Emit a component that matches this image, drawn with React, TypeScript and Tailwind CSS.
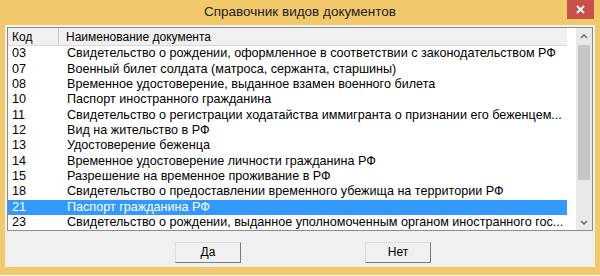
import React from 'react';

const rows = [
  { code: '03', name: 'Свидетельство о рождении, оформленное в соответствии с законодательством РФ' },
  { code: '07', name: 'Военный билет солдата (матроса, сержанта, старшины)' },
  { code: '08', name: 'Временное удостоверение, выданное взамен военного билета' },
  { code: '10', name: 'Паспорт иностранного гражданина' },
  { code: '11', name: 'Свидетельство о регистрации ходатайства иммигранта о признании его беженцем...' },
  { code: '12', name: 'Вид на жительство в РФ' },
  { code: '13', name: 'Удостоверение беженца' },
  { code: '14', name: 'Временное удостоверение личности гражданина РФ' },
  { code: '15', name: 'Разрешение на временное проживание в РФ' },
  { code: '18', name: 'Свидетельство о предоставлении временного убежища на территории РФ' },
  { code: '21', name: 'Паспорт гражданина РФ' },
  { code: '23', name: 'Свидетельство о рождении, выданное уполномоченным органом иностранного гос...' },
];

const selected = '21';

function Button({ label }: { label: string }) {
  return (
    <button className="h-[21px] w-[66px] border border-[#dcdcdc] border-r-[#7a7a7a] border-b-[#7a7a7a] bg-[#f0f0f0] text-[12px] text-black">
      {label}
    </button>
  );
}

export default function App() {
  return (
    <div className="flex h-[276px] w-[600px] flex-col bg-white font-['Liberation_Sans',Arial,sans-serif]">
      <div className="flex h-[275px] flex-col bg-[#f1c86a] px-[5px] pb-[8px]">
        {/* title bar */}
        <div className="relative flex h-[25px] items-center justify-center">
          <span className="text-[13.5px] text-[#222]">Справочник видов документов</span>
          <div className="absolute right-[1px] top-0 flex h-[19px] w-[27px] items-center justify-center bg-[#c9504b]">
            <svg width="9" height="9" viewBox="0 0 9 9">
              <path d="M1 1L8 8M8 1L1 8" stroke="#fff" strokeWidth="1.8" />
            </svg>
          </div>
        </div>

        {/* client */}
        <div className="flex flex-1 flex-col bg-[#f0f0f0] px-[2px] pt-[2px]">
          <div className="flex h-[204px] border border-[#8c8c8c] bg-white">
            <div className="flex w-[559px] flex-col overflow-hidden text-[12.6px] text-black">
              <div className="flex h-[18px] border-b border-[#d8d8d8] bg-[#f0f0f0] text-[12px]">
                <div className="flex w-[51px] items-center border-r border-[#c8c8c8] pl-[4px]">Код</div>
                <div className="flex items-center pl-[7px]">Наименование документа</div>
              </div>
              {rows.map((r) => (
                <div
                  key={r.code}
                  className={
                    r.code === selected
                      ? 'flex h-[15.36px] items-center bg-[#3399ff] text-white'
                      : 'flex h-[15.36px] items-center'
                  }
                >
                  <div className="w-[52px] shrink-0 pl-[4px]">{r.code}</div>
                  <div className="whitespace-nowrap pl-[7px]">{r.name}</div>
                </div>
              ))}
            </div>
            <div className="flex-1" />
            {/* scrollbar */}
            <div className="flex w-[16px] flex-col items-center bg-[#e9e9e9]">
              <div className="flex h-[16px] items-center justify-center">
                <svg width="8" height="5" viewBox="0 0 8 5">
                  <path d="M1 4L4 1L7 4" fill="none" stroke="#606060" strokeWidth="1.3" />
                </svg>
              </div>
              <div className="mt-[1px] h-[135px] w-[12px] bg-[#c6c6c6]" />
              <div className="flex-1" />
              <div className="flex h-[16px] items-center justify-center">
                <svg width="8" height="5" viewBox="0 0 8 5">
                  <path d="M1 1L4 4L7 1" fill="none" stroke="#606060" strokeWidth="1.3" />
                </svg>
              </div>
            </div>
          </div>
          <div className="flex flex-1 items-start pt-[8px]">
            <div className="ml-[168px]">
              <Button label="Да" />
            </div>
            <div className="ml-[124px]">
              <Button label="Нет" />
            </div>
          </div>
        </div>
      </div>
    </div>
  );
}
